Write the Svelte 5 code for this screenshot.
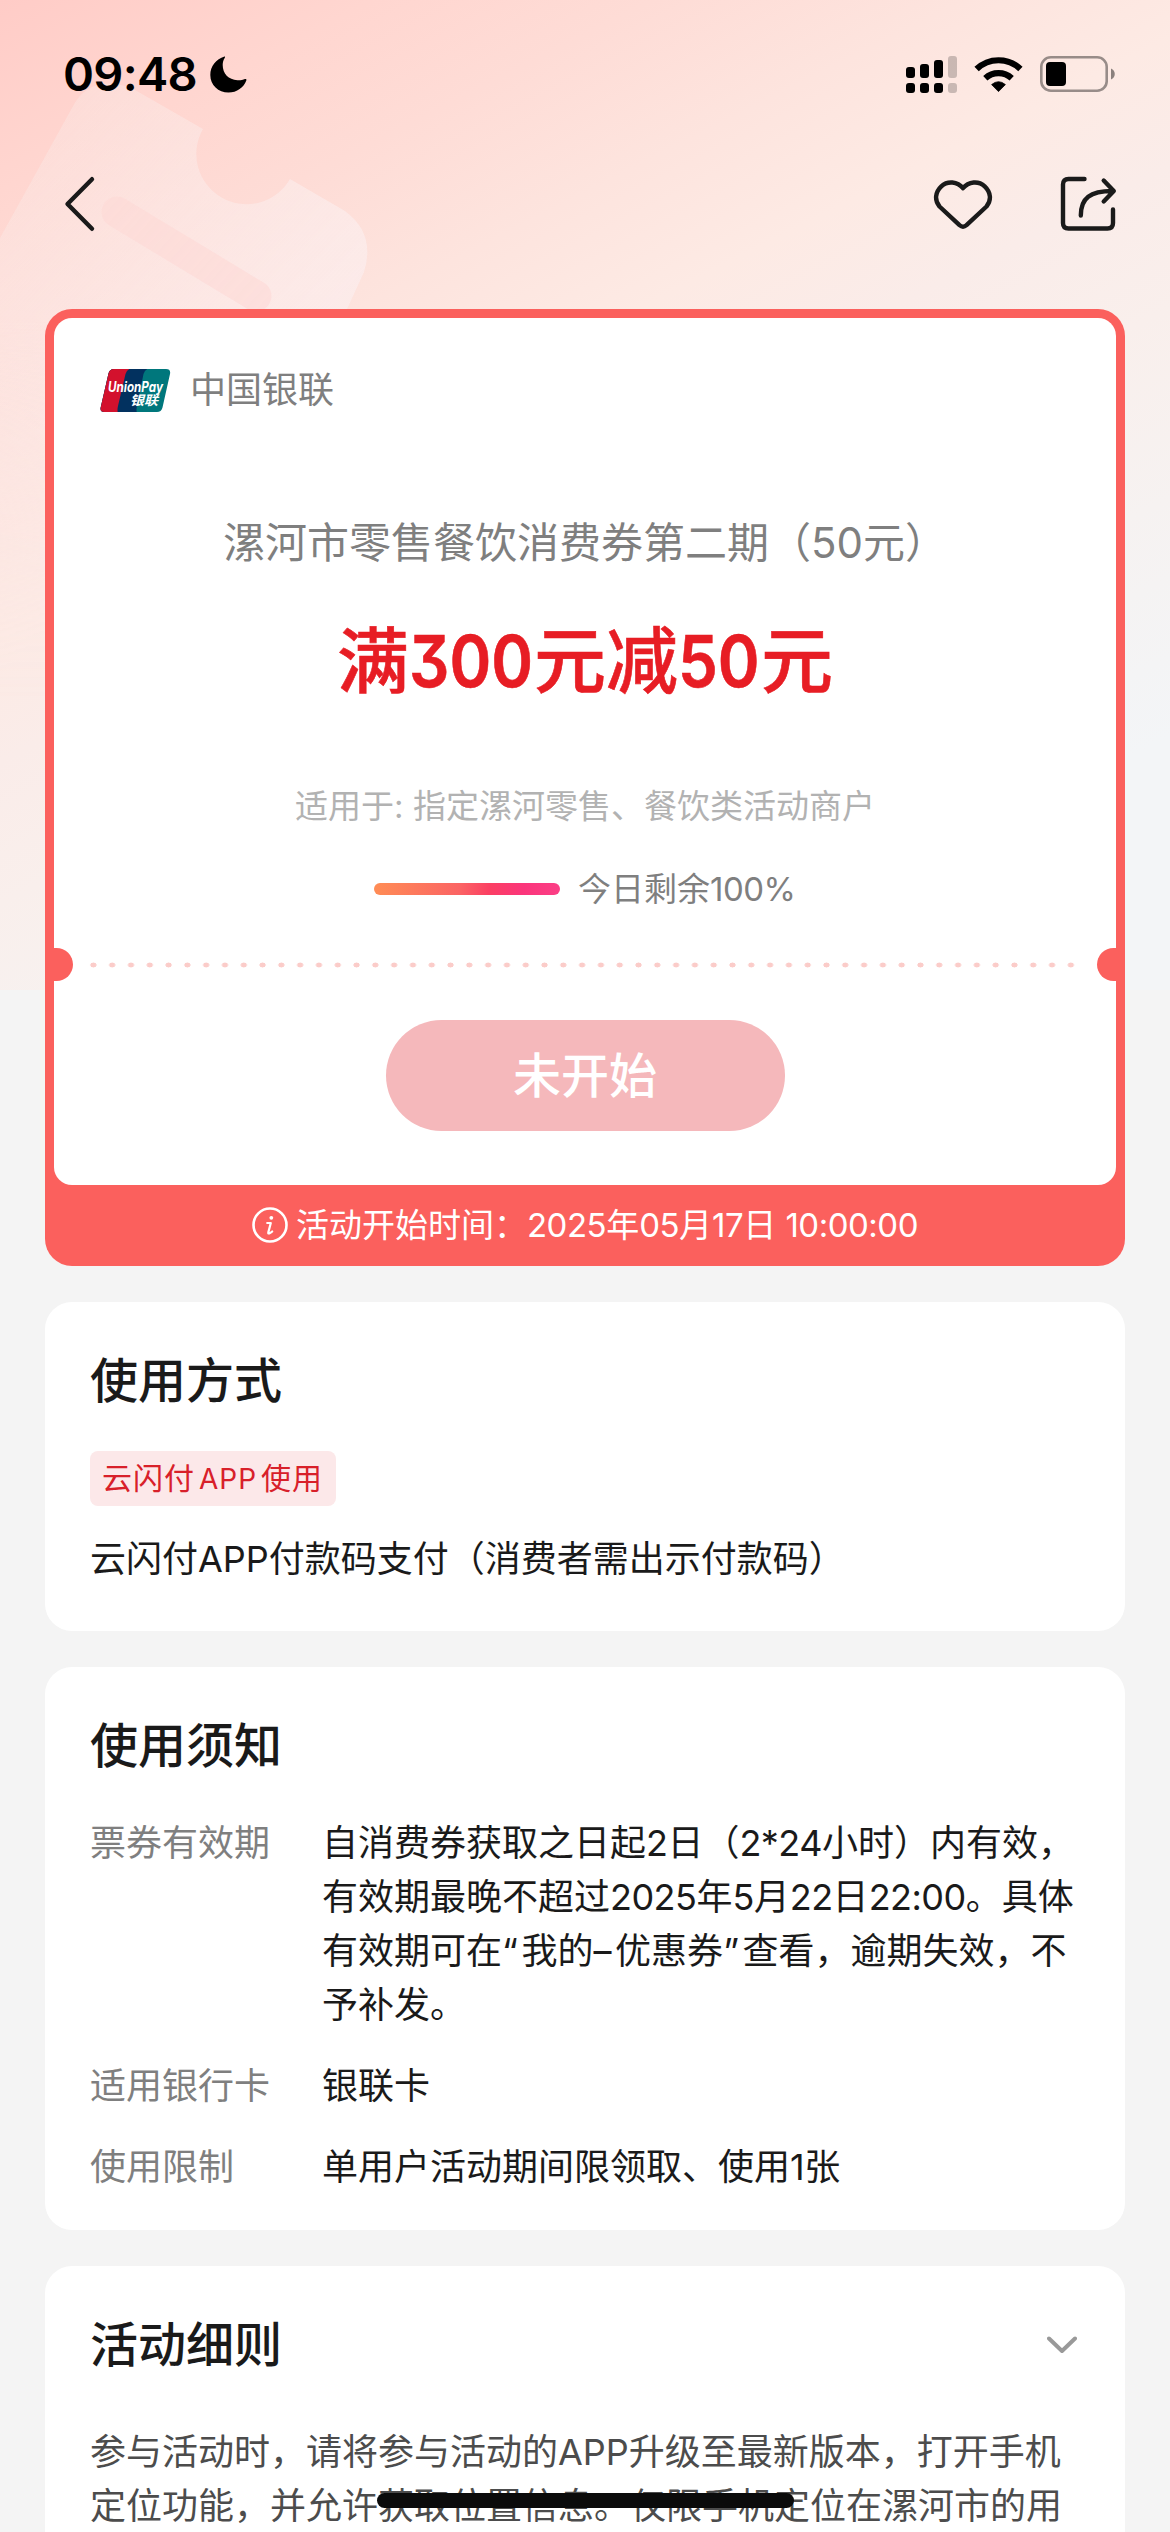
<script lang="ts">
	type Notice = { label: string; lines: string[] };

	const coupon = {
		brand: '中国银联',
		title: '漯河市零售餐饮消费券第二期（50元）',
		scope: '适用于: 指定漯河零售、餐饮类活动商户',
		remaining: 100,
		startTime: '2025年05月17日 10:00:00'
	};

	const notices: Notice[] = [
		{
			label: '票券有效期',
			lines: [
				'自消费券获取之日起2日（2*24小时）内有效，',
				'有效期最晚不超过2025年5月22日22:00。具体',
				'有效期可在“我的–优惠券”查看，逾期失效，不',
				'予补发。'
			]
		},
		{ label: '适用银行卡', lines: ['银联卡'] },
		{ label: '使用限制', lines: ['单用户活动期间限领取、使用1张'] }
	];

	const rules = [
		'参与活动时，请将参与活动的APP升级至最新版本，打开手机',
		'定位功能，并允许获取位置信息。仅限手机定位在漯河市的用'
	];

	// signal columns: top y and whether the bar is lit
	const bars = [
		{ x: 0, y: 11, on: true },
		{ x: 14, y: 8, on: true },
		{ x: 28, y: 4, on: true },
		{ x: 42, y: 0, on: false }
	];

	// digits are set a little tighter and quotes a little looser than the rest of a line
	function pieces(text: string) {
		return text
			.split(/([\d:*]{2,}|\d|[“”–])/)
			.filter(Boolean)
			.map((t) => ({ t, kind: /^[\d:*]/.test(t) ? 'digits' : /^[“”–]/.test(t) ? 'mark' : '' }));
	}
</script>

{#snippet mixed(text: string)}{#each pieces(text) as p}<span class={p.kind}>{p.t}</span>{/each}{/snippet}

<div class="page">
	<div class="backdrop">
		<svg width="400" height="700" viewBox="0 0 400 700">
			<defs>
				<linearGradient id="ticket" gradientUnits="userSpaceOnUse" x1="20" y1="90" x2="300" y2="340">
					<stop offset="0" stop-color="#fbe6e2" stop-opacity="0.4" />
					<stop offset="1" stop-color="#fcebea" stop-opacity="0.9" />
				</linearGradient>
			</defs>
			<path
				d="M0 238L72 108Q88 76 125 86Q134 89 142 94L203 129A49 49 0 1 0 290 179L345 211Q376 234 364 272L342 320V700H0Z"
				fill="url(#ticket)"
			/>
			<path d="M117 212L256 296" stroke="#fdd9d5" stroke-opacity="0.6" stroke-width="31" stroke-linecap="round" />
		</svg>
	</div>

	<header class="status">
		<div class="clock">
			<span>09:48</span>
			<svg width="37" height="37" viewBox="0 0 37 37">
				<path d="M14.5 .6C6 3 .3 10.500 .3 19C.3 29 8.300 36.600 18.500 36.600C26.800 36.600 34 31.500 36.400 24.300C36.700 23.300 36 22.600 35 23C32.800 23.900 30 24.400 27.500 24.200C18.500 23.800 12.700 17.500 12.700 9C12.700 6.500 13.300 4 14.800 1.700C15.300 .9 15 .5 14.500 .6Z" />
			</svg>
		</div>
		<div class="indicators">
			<svg width="51" height="37" viewBox="0 0 51 37">
				{#each bars as bar}
					<g opacity={bar.on ? 1 : 0.2}>
						<rect x={bar.x} y={bar.y} width="9" height={22 - bar.y} rx="3" />
						<rect x={bar.x} y="27" width="9" height="10" rx="3" />
					</g>
				{/each}
			</svg>
			<svg width="49" height="36" viewBox="0 0 49 36">
				<path d="M24.500 35.600L17.600 28.600Q24.500 22.800 31.400 28.600Z" stroke="#000" stroke-width=".8" stroke-linejoin="round" />
				<path d="M11.300 22.200A19.500 19.500 0 0 1 37.700 22.200" fill="none" stroke="#000" stroke-width="6.200" />
				<path d="M2.600 13.100A31.500 31.500 0 0 1 46.400 13.100" fill="none" stroke="#000" stroke-width="6.200" />
			</svg>
			<svg width="76" height="36" viewBox="0 0 76 36">
				<rect x="1.300" y="1.300" width="65.400" height="33.400" rx="9.500" fill="none" stroke="#000" stroke-opacity=".4" stroke-width="2.600" />
				<rect x="6" y="6" width="20" height="24" rx="4" />
				<path d="M71 12.500C76 14.500 76 21.500 71 23.500Z" opacity=".45" />
			</svg>
		</div>
	</header>

	<nav>
		<button class="icon" aria-label="返回">
			<svg width="32" height="56" viewBox="0 0 32 56">
				<path d="M28 3.200L3.500 28L28 52.800" />
			</svg>
		</button>
		<div class="actions">
			<button class="icon" aria-label="收藏">
				<svg width="60" height="50" viewBox="0 0 60 50">
					<path d="M30 9.200C24.500 2.300 14.500 1.500 8.300 7.300C2 13.200 1.400 21.500 6.500 27.500L26.500 46.200Q30 49.200 33.500 46.200L53.500 27.500C58.600 21.500 58 13.200 51.700 7.300C45.500 1.500 35.500 2.300 30 9.200Z" />
				</svg>
			</button>
			<button class="icon" aria-label="分享">
				<svg width="57" height="56" viewBox="0 0 57 56">
					<path d="M24.500 3H8.500Q3 3 3 8.500V47Q3 52.500 8.500 52.500H47.500Q53 52.500 53 47V33.500" />
					<path d="M20.800 39.500C20.800 22 30 15 52.500 15M43.700 4.500L53.800 15L43.700 25.500" />
				</svg>
			</button>
		</div>
	</nav>

	<main>
		<section class="coupon">
			<div class="face">
				<div class="brand">
					<svg width="71" height="45" viewBox="0 0 71 45">
						<defs>
							<clipPath id="logo"><path d="M14 1H66Q71 1 70 6L62.500 39.500Q61.300 44 57 44H4.500Q-.2 44 .7 39.500L8.500 5.500Q9.500 1 14 1Z" /></clipPath>
						</defs>
						<g clip-path="url(#logo)">
							<rect width="71" height="45" fill="#00777c" />
							<path d="M0 0H50Q45 1 43.500 6L37 38Q36 42 37 45H0Z" fill="#02315f" />
							<path d="M0 0H32Q27 1 25.500 6L18 38Q17 42 18 45H0Z" fill="#d3112d" />
						</g>
						<text x="8" y="24" class="latin" textLength="55" lengthAdjust="spacingAndGlyphs">UnionPay</text>
						<text x="30" y="36.500" class="cn" textLength="28" lengthAdjust="spacingAndGlyphs">银联</text>
					</svg>
					<span>{coupon.brand}</span>
				</div>
				<h1>{coupon.title}</h1>
				<p class="price">满<span class="num three">300</span>元减<span class="num two">50</span>元</p>
				<p class="scope">{coupon.scope}</p>
				<div class="remain">
					<div class="track"><div class="fill" style="width: {coupon.remaining}%"></div></div>
					<span>{@render mixed(`今日剩余${coupon.remaining}%`)}</span>
				</div>
				<div class="tear">
					<i class="notch left"></i>
					<div class="dots"></div>
					<i class="notch right"></i>
				</div>
				<button class="claim" disabled>未开始</button>
			</div>
			<div class="start">
				<svg width="36" height="36" viewBox="0 0 36 36">
					<circle cx="18" cy="18" r="16.500" fill="none" stroke="#fff" stroke-width="2.600" />
					<circle cx="19.300" cy="10.800" r="1.900" fill="#fff" />
					<path d="M15.200 16H18.800L16.300 25.400Q16 26.800 17.300 26.400Q18.800 25.900 20.200 24.500" fill="none" stroke="#fff" stroke-width="2.200" stroke-linecap="round" stroke-linejoin="round" />
				</svg>
				<span>{@render mixed(`活动开始时间：${coupon.startTime}`)}</span>
			</div>
		</section>

		<section class="card">
			<h2>使用方式</h2>
			<span class="tag">云闪付<em>APP</em>使用</span>
			<p class="method">云闪付APP付款码支付（消费者需出示付款码）</p>
		</section>

		<section class="card">
			<h2>使用须知</h2>
			<dl>
				{#each notices as notice}
					<dt>{notice.label}</dt>
					<dd>
						{#each notice.lines as line}
							<div>{@render mixed(line)}</div>
						{/each}
					</dd>
				{/each}
			</dl>
		</section>

		<section class="card">
			<div class="heading">
				<h2>活动细则</h2>
				<svg width="30" height="18" viewBox="0 0 30 18">
					<path d="M2 2.500L15 15L28 2.500" fill="none" stroke="#999" stroke-width="4" stroke-linecap="round" stroke-linejoin="round" />
				</svg>
			</div>
			<div class="rules">
				{#each rules as rule}
					<div>{rule}</div>
				{/each}
			</div>
		</section>
	</main>

	<div class="home"></div>
</div>

<style>
	:global(body) {
		margin: 0;
		background: #f4f4f4;
	}

	.page {
		position: relative;
		width: 1170px;
		height: 2532px;
		overflow: hidden;
		background: #f4f4f4;
		color: #1a1a1a;
		font-family: Inter, 'Noto Sans CJK SC', sans-serif;
		white-space: nowrap;
	}

	svg {
		display: block;
		flex: none;
	}

	h1,
	h2,
	p,
	dl,
	dd {
		margin: 0;
	}

	button {
		padding: 0;
		border: none;
		background: none;
		font-family: inherit;
	}

	.digits {
		letter-spacing: -0.015em;
	}

	.mark {
		letter-spacing: 0.1em;
	}

	.backdrop {
		position: absolute;
		top: 0;
		left: 0;
		width: 1170px;
		height: 990px;
		background: linear-gradient(
			153deg,
			#ffccc7 0%,
			#ffd6d0 12%,
			#fedcd6 21%,
			#fde4de 31%,
			#fdeae4 40%,
			#faece9 48%,
			#f9efec 57%,
			#f6f2f1 69%,
			#f3f5f7 84%
		);
	}

	.backdrop svg {
		mask-image: linear-gradient(#000 45%, transparent);
	}

	.status {
		position: relative;
		display: flex;
		justify-content: space-between;
		align-items: center;
		height: 148px;
		padding: 0 54px 0 63px;
	}

	.clock {
		display: flex;
		align-items: center;
		gap: 13px;
		color: #000;
		font-size: 47px;
		font-weight: 600;
		line-height: 60px;
		letter-spacing: -0.7px;
	}

	.indicators {
		display: flex;
		align-items: center;
		gap: 17px;
	}

	nav {
		position: relative;
		display: flex;
		justify-content: space-between;
		align-items: center;
		height: 112px;
		padding: 0 53px 0 64px;
	}

	.actions {
		display: flex;
		align-items: center;
		gap: 67px;
	}

	.icon svg {
		fill: none;
		stroke: #1a1a1a;
		stroke-width: 4.4;
		stroke-linecap: round;
		stroke-linejoin: round;
	}

	main {
		position: relative;
		display: flex;
		flex-direction: column;
		gap: 36px;
		padding: 49px 45px 0;
	}

	.coupon {
		padding: 9px 9px 0;
		border-radius: 27px;
		background: #fb605d;
	}

	.face {
		display: flex;
		flex-direction: column;
		align-items: center;
		height: 817px;
		padding-top: 50px;
		border-radius: 18px;
		background: #fff;
	}

	.brand {
		display: flex;
		align-items: center;
		align-self: flex-start;
		gap: 19px;
		height: 45px;
		padding-left: 46px;
		color: #7f7f7f;
		font-size: 36px;
		line-height: 45px;
	}

	.brand svg {
		overflow: visible;
	}

	.brand text {
		fill: #fff;
		font-style: italic;
		font-weight: 700;
	}

	.latin {
		font-size: 14px;
	}

	.cn {
		font-size: 13px;
	}

	h1 {
		margin-top: 100px;
		color: #7f7f7f;
		font-size: 42px;
		font-weight: 400;
		line-height: 60px;
	}

	.price {
		margin-top: 38px;
		color: #e71d24;
		font-size: 72px;
		font-weight: 500;
		line-height: 100px;
		-webkit-text-stroke: 0.6px #e71d24;
	}

	.num {
		display: inline-block;
		font-weight: 600;
		font-feature-settings: 'cv09';
		transform: scaleX(0.88);
		transform-origin: left;
	}

	.three {
		width: 125px;
	}

	.two {
		width: 83px;
	}

	.scope {
		margin-top: 72px;
		color: #b2b2b2;
		font-size: 33px;
		line-height: 46px;
	}

	.remain {
		display: flex;
		align-items: center;
		gap: 18px;
		margin-top: 37px;
		color: #7f7f7f;
		font-size: 33px;
		line-height: 46px;
	}

	.track {
		width: 186px;
		height: 12px;
		border-radius: 6px;
		overflow: hidden;
	}

	.fill {
		height: 100%;
		background: linear-gradient(100deg, #ff8d55, #fb6464 46%, #fb3f63 62%, #fb357b 80%, #fb3f86);
	}

	.tear {
		display: flex;
		justify-content: space-between;
		align-items: center;
		align-self: stretch;
		height: 33px;
		margin-top: 36px;
	}

	.notch {
		width: 19px;
		height: 33px;
		background: #fb605d;
	}

	.left {
		border-radius: 0 17px 17px 0;
	}

	.right {
		border-radius: 17px 0 0 17px;
	}

	.dots {
		width: 996.4px;
		height: 6px;
		margin-right: 5px;
		background: radial-gradient(ellipse 3.3px 2.7px at center, #fbccc9 85%, transparent 100%) 0 0 / 18.8px 6px;
	}

	.claim {
		width: 399px;
		height: 111px;
		margin-top: 39px;
		border-radius: 56px;
		background: #f5b8bb;
		color: #fff;
		font-size: 48px;
		font-weight: 500;
		line-height: 110px;
	}

	.start {
		display: flex;
		justify-content: center;
		align-items: center;
		gap: 8px;
		height: 80px;
		padding-bottom: 1px;
		color: #fff;
		font-size: 33px;
		line-height: 46px;
	}

	.card {
		display: flex;
		flex-direction: column;
		align-items: flex-start;
		padding: 45px 45px 36px;
		border-radius: 27px;
		background: #fff;
	}

	h2 {
		font-size: 48px;
		font-weight: 500;
		line-height: 68px;
	}

	.tag {
		height: 55px;
		margin-top: 36px;
		padding: 0 13px 0 12px;
		border-radius: 8px;
		background: #fce8e9;
		color: #d8202a;
		font-size: 30px;
		line-height: 55px;
		letter-spacing: 1px;
	}

	em {
		margin: 0 4px;
		font-size: 28px;
		font-style: normal;
	}

	.method {
		margin-top: 26px;
		margin-bottom: 9px;
		font-size: 36px;
		line-height: 54px;
	}

	dl {
		display: grid;
		grid-template-columns: 232px auto;
		row-gap: 27px;
		margin-top: 36px;
		font-size: 36px;
		line-height: 54px;
	}

	dt {
		color: #7f7f7f;
	}

	.heading {
		display: flex;
		justify-content: space-between;
		align-items: center;
		align-self: stretch;
		padding-right: 3px;
	}

	.rules {
		margin-top: 46px;
		color: #4c4c4c;
		font-size: 36px;
		line-height: 54px;
	}

	.home {
		position: absolute;
		left: 377px;
		bottom: 24px;
		width: 417px;
		height: 15px;
		border-radius: 8px;
		background: #0b0b0b;
	}
</style>
